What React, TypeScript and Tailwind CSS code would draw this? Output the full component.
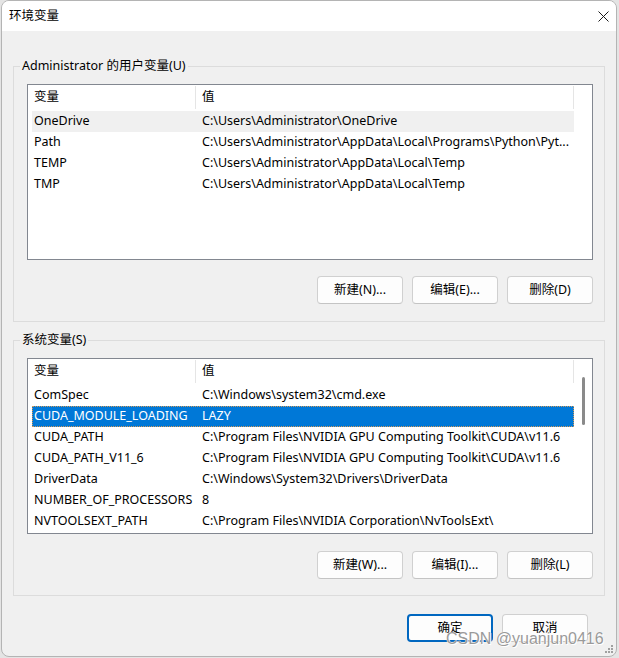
import React from "react";

type Row = { name: string; value: string; state?: "hover" | "selected" };

const userVars: Row[] = [
  { name: "OneDrive", value: "C:\\Users\\Administrator\\OneDrive", state: "hover" },
  { name: "Path", value: "C:\\Users\\Administrator\\AppData\\Local\\Programs\\Python\\Pyt..." },
  { name: "TEMP", value: "C:\\Users\\Administrator\\AppData\\Local\\Temp" },
  { name: "TMP", value: "C:\\Users\\Administrator\\AppData\\Local\\Temp" },
];

const sysVars: Row[] = [
  { name: "ComSpec", value: "C:\\Windows\\system32\\cmd.exe" },
  { name: "CUDA_MODULE_LOADING", value: "LAZY", state: "selected" },
  { name: "CUDA_PATH", value: "C:\\Program Files\\NVIDIA GPU Computing Toolkit\\CUDA\\v11.6" },
  { name: "CUDA_PATH_V11_6", value: "C:\\Program Files\\NVIDIA GPU Computing Toolkit\\CUDA\\v11.6" },
  { name: "DriverData", value: "C:\\Windows\\System32\\Drivers\\DriverData" },
  { name: "NUMBER_OF_PROCESSORS", value: "8" },
  { name: "NVTOOLSEXT_PATH", value: "C:\\Program Files\\NVIDIA Corporation\\NvToolsExt\\" },
];

function ListView({ rows, scroll }: { rows: Row[]; scroll?: boolean }) {
  return (
    <div className="ml-[13px] mt-[10px] w-[566px] h-[176px] border border-[#828790] bg-white flex overflow-hidden">
      <div className="w-[546px] flex flex-col">
        <div className="h-[26px] flex shrink-0">
          <div className="w-[168px] pl-[6px] flex items-center border-r border-[#e5e5e5] mt-[1px] mb-[2px]">变量</div>
          <div className="flex-1 pl-[6px] flex items-center border-r border-[#e5e5e5] mt-[1px] mb-[2px]">值</div>
        </div>
        {rows.map((r) => (
          <div
            key={r.name}
            className={
              "ml-[4px] w-[542px] h-[21px] flex items-center whitespace-nowrap shrink-0 " +
              (r.state === "selected"
                ? "bg-[#0078d7] text-white outline-1 outline-dotted outline-[#d39a5a] -outline-offset-1"
                : r.state === "hover"
                ? "bg-[#f0f0f0]"
                : "")
            }
          >
            <div className="w-[164px] pl-[2px] overflow-hidden">{r.name}</div>
            <div className="flex-1 pl-[6px] overflow-hidden">{r.value}</div>
          </div>
        ))}
      </div>
      <div className="flex-1">
        {scroll ? <div className="ml-[8px] mt-[18px] w-[3px] h-[48px] rounded-full bg-[#8a8a8a]" /> : null}
      </div>
    </div>
  );
}

function Btn({ label, primary }: { label: string; primary?: boolean }) {
  return (
    <button
      className={
        "w-[86px] h-[28px] rounded-[4px] bg-[#fdfdfd] flex items-center justify-center text-black " +
        (primary
          ? "border-2 border-[#0067c0]"
          : "border border-[#d0d0d0] border-b-[#c4c4c4]")
      }
    >
      {label}
    </button>
  );
}

function Group({
  title,
  rows,
  scroll,
  buttons,
  last,
}: {
  title: string;
  rows: Row[];
  scroll?: boolean;
  buttons: string[];
  last?: boolean;
}) {
  return (
    <fieldset
      className={
        "ml-[11px] w-[592px] border border-[#dcdcdc] " + (last ? "mt-[10px] pb-[16px]" : "mt-[27px] pb-[17px]")
      }
    >
      <legend className="ml-[6px] px-[2px] leading-[16px]">{title}</legend>
      <ListView rows={rows} scroll={scroll} />
      <div className={"ml-[13px] w-[566px] flex justify-end gap-[9px] " + (last ? "mt-[17px]" : "mt-[16px]")}>
        {buttons.map((b) => (
          <Btn key={b} label={b} />
        ))}
      </div>
    </fieldset>
  );
}

export default function App() {
  return (
    <div className="w-[619px] h-[658px] bg-[#e4e4e4] flex overflow-hidden font-['Noto_Sans','Noto_Sans_CJK_SC',sans-serif] text-[12.5px] text-black">
      <div className="ml-[1px] w-[616px] h-[657px] bg-[#f0f0f0] rounded-[8px] border border-[#b4b4b4] flex flex-col relative overflow-hidden">
        <div className="h-[30px] bg-white flex items-center justify-between shrink-0">
          <span className="pl-[7px] text-[12.5px]">环境变量</span>
          <svg className="mr-[7px]" width="11" height="11" viewBox="0 0 11 11">
            <path d="M0.5 0.5 L10.5 10.5 M10.5 0.5 L0.5 10.5" stroke="#1a1a1a" strokeWidth="1" fill="none" />
          </svg>
        </div>
        <Group
          title="Administrator 的用户变量(U)"
          rows={userVars}
          buttons={["新建(N)...", "编辑(E)...", "删除(D)"]}
        />
        <Group
          title="系统变量(S)"
          rows={sysVars}
          scroll
          last
          buttons={["新建(W)...", "编辑(I)...", "删除(L)"]}
        />
        <div className="ml-[11px] w-[592px] mt-[18px] pr-[17px] flex justify-end gap-[9px]">
          <Btn label="确定" primary />
          <Btn label="取消" />
        </div>
        <svg className="absolute right-[2px] bottom-[2px]" width="10" height="10" viewBox="0 0 10 10">
          <g fill="#a0a0a0">
            <rect x="7" y="1" width="2" height="2" />
            <rect x="4" y="4" width="2" height="2" />
            <rect x="7" y="4" width="2" height="2" />
            <rect x="1" y="7" width="2" height="2" />
            <rect x="4" y="7" width="2" height="2" />
            <rect x="7" y="7" width="2" height="2" />
          </g>
        </svg>
        <div className="absolute left-[444px] top-[628px] font-['Liberation_Sans',Arial,sans-serif] text-[16px] leading-[20px] text-[#9a9a9a] [text-shadow:0_0_1px_#fff,0_0_1px_#fff,1px_1px_0_#fff]">
          CSDN @yuanjun0416
        </div>
      </div>
    </div>
  );
}
